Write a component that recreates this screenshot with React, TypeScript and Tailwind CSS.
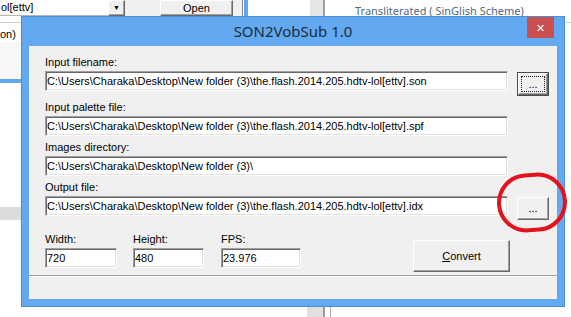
const path = "C:\\Users\\Charaka\\Desktop\\New folder (3)\\";
const base = path + "the.flash.2014.205.hdtv-lol[ettv]";

const fieldCls =
  "flex h-[20px] items-center overflow-hidden whitespace-nowrap border border-b-white border-l-[#a0a0a0] border-r-white border-t-[#a0a0a0] bg-white pl-[1px] shadow-[inset_1px_1px_0_#696969,inset_-1px_-1px_0_#e3e3e3]";

const raisedCls =
  "flex items-center justify-center border border-b-[#696969] border-l-white border-r-[#696969] border-t-white bg-[#f0f0f0] shadow-[inset_-1px_-1px_0_#a0a0a0]";

const Field = ({ label, value, browse }: { label: string; value: string; browse?: "focus" | "plain" }) => (
  <div className="mb-[3px] flex flex-col">
    <div className="h-[16px] leading-[16px]">{label}</div>
    <div className="mt-[1px] flex items-start">
      <div className={`${fieldCls} w-[463px]`}>{value}</div>
      {browse === "focus" && (
        <div className="ml-[9px] mt-[1px] h-[24px] w-[32px] border border-[#4a4a4a]">
          <div className={`${raisedCls} h-full w-full`}>
            <div className="flex h-[16px] w-[24px] items-center justify-center border border-dotted border-[#202020] pb-[3px] pt-[3px] text-[11px]">
              ...
            </div>
          </div>
        </div>
      )}
      {browse === "plain" && (
        <div className={`${raisedCls} ml-[9px] mt-[1px] h-[23px] w-[32px]`}>...</div>
      )}
    </div>
  </div>
);

const Small = ({ label, value, w }: { label: string; value: string; w: string }) => (
  <div className="flex flex-col">
    <div className="h-[16px] leading-[16px]">{label}</div>
    <div className={`${fieldCls} mt-[1px] ${w}`}>{value}</div>
  </div>
);

export default function App() {
  return (
    <div className="relative flex h-[317px] w-[571px] flex-col overflow-hidden bg-white font-['Liberation_Sans',Arial,sans-serif] text-[11px] text-black">
      {/* background window strip */}
      <div className="flex h-[23px] shrink-0 border-b border-[#d0d0d0]">
        <div className="flex h-[16px] w-[108px] items-center border-b border-[#b5b5b5] bg-white pl-[1px]">ol[ettv]</div>
        <div className={`${raisedCls} h-[16px] w-[17px] text-[7px]`}>▼</div>
        <div className="h-[16px] w-[35px] bg-[#f0f0f0]" />
        <div className={`${raisedCls} h-[16px] w-[73px] pt-[1px]`}>Open</div>
        <div className="h-[16px] w-[9px] bg-[#f0f0f0]" />
        <div className="h-[16px] w-[1px] bg-[#8a8a8a]" />
        <div className="h-[16px] w-[1px] bg-white" />
        <div className="h-[16px] w-[4px] bg-[#62a8ee]" />
        <div className="h-[16px] w-[62px] bg-white" />
        <div className="h-[16px] w-[13px] bg-[#e6e6e6]" />
        <div className="h-[16px] w-[2px] bg-[#a0a0a0]" />
        <div className="pl-[30px] pt-[4px] font-['Noto_Sans',sans-serif] text-[11px] leading-[14px] text-[#55677c]">
          Transliterated ( SinGlish Scheme)
        </div>
      </div>
      <div className="flex flex-1">
        <div className="flex w-[21px] flex-col">
          <div className="h-[19px] pt-[4px] leading-[14px]">on)</div>
          <div className="h-[37px] bg-[#f7f7f7]" />
          <div className="h-[4px] bg-[#62a8ee]" />
          <div className="h-[124px]" />
          <div className="h-[13px] bg-[#dcdcdc]" />
        </div>
      </div>
      <div className="flex h-[10px] shrink-0">
        <div className="w-[307px]" />
        <div className="w-[16px] bg-[#e0e0e0]" />
        <div className="w-[2px] bg-[#9a9a9a]" />
        <div className="w-[5px]" />
        <div className="w-[1px] bg-[#b0b0b0]" />
      </div>

      {/* dialog */}
      <div className="absolute left-[21px] top-[16px] flex h-[291px] w-[544px] flex-col border border-[#4b8ed6] bg-[#62a9ef]">
        <div className="relative flex h-[29px] shrink-0 items-center justify-center font-['Noto_Sans',sans-serif] text-[15px] text-[#1d2c3e]">
          SON2VobSub 1.0
          <div className="absolute right-[10px] top-0 flex h-[21px] w-[27px] items-center justify-center bg-[#c9504f] text-[11px] leading-none text-white">
            ✕
          </div>
        </div>
        <div className="mx-[7px] mb-[7px] flex flex-1 flex-col bg-[#f0f0f0]">
          <div className="flex flex-1 flex-col pl-[16px] pt-[8px]">
            <Field label="Input filename:" value={base + ".son"} browse="focus" />
            <Field label="Input palette file:" value={base + ".spf"} />
            <Field label="Images directory:" value={path} />
            <Field label="Output file:" value={base + ".idx"} browse="plain" />
            <div className="mt-[8px] flex items-start">
              <Small label="Width:" value="720" w="w-[72px]" />
              <div className="ml-[16px]">
                <Small label="Height:" value="480" w="w-[71px]" />
              </div>
              <div className="ml-[17px]">
                <Small label="FPS:" value="23.976" w="w-[80px]" />
              </div>
              <div className={`${raisedCls} ml-[112px] mt-[9px] h-[32px] w-[97px]`}>
                <span>
                  <span className="underline">C</span>onvert
                </span>
              </div>
            </div>
          </div>
          <div className="h-[1px] bg-[#a0a0a0]" />
          <div className="h-[1px] bg-white" />
          <div className="h-[22px]" />
        </div>
      </div>

      {/* red annotation circle */}
      <div className="absolute left-[497px] top-[173px] h-[59px] w-[70px] rotate-[-4deg] rounded-full border-[4px] border-[#e3121b]" />
    </div>
  );
}
